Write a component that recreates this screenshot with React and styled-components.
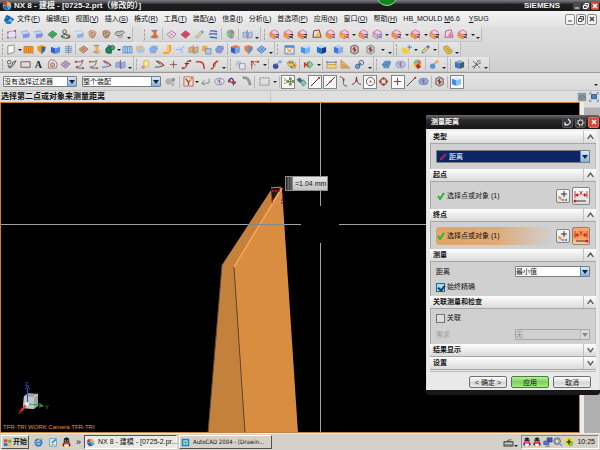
import React from 'react'
import styled, { createGlobalStyle, css } from 'styled-components'

const GlobalStyle = createGlobalStyle`
    * {
        box-sizing: border-box;
    }
    body {
        margin: 0;
        background: #000;
        color: #111;
        font: 7px/10px "Liberation Sans", "Noto Sans CJK SC", sans-serif;
    }
    button, select, input {
        font: inherit;
        color: inherit;
        margin: 0;
        padding: 0;
    }
    svg {
        flex-shrink: 0;
    }
`;

const Screen = styled.div`
    display: flex;
    flex-direction: column;
    min-height: 100vh;
`;

const TitleBar = styled.header`
    position: relative;
    display: flex;
    align-items: center;
    height: 11px;
    padding: 0 1px 0 2px;
    background: linear-gradient(#777a80, #4c4c50 3px, #202022 4px, #1a1a1b);
    color: #f2f2f2;
    overflow: hidden;

    h1 {
        flex: 1;
        margin: 0 0 0 2px;
        font-size: 8px;
        line-height: 11px;
        font-weight: 700;
        white-space: pre;
    }
    strong {
        margin-right: 12px;
        font-size: 8px;
    }
`;

const GreenBall = styled.span`
    position: absolute;
    left: 376px;
    top: -16px;
    width: 22px;
    height: 22px;
    border: 1px solid #b9c4b9;
    border-radius: 50%;
    background: #11861b;
`;

const WinButton = styled.button`
    display: flex;
    align-items: center;
    justify-content: center;
    width: 8px;
    height: 8px;
    margin-left: 1px;
    border: 0;
    border-radius: 1px;
    background: ${props => props.$bg || '#4b4b4e'};
    color: ${props => props.$ink || '#fff'};

    ${props => props.$framed && css`
        width: 10px;
        height: 11px;
        border: 1px solid #8c8c8c;
        border-radius: 2px;
    `}
`;

const MenuBar = styled.nav`
    display: flex;
    align-items: center;
    height: 16px;
    padding: 0 3px;
    background: linear-gradient(#f4f4f4, #e2e2e2);

    > svg {
        margin-right: 3px;
    }
`;

const MenuItem = styled.button`
    margin-right: ${props => props.$wide ? 9 : 6}px;
    border: 0;
    background: none;
    white-space: nowrap;
`;

const Spacer = styled.span`
    flex: 1;
`;

const ToolArea = styled.div`
    background: linear-gradient(#dedede, #cfcfcf);
    border-bottom: 1px solid #9a9a9a;
`;

const ToolRow = styled.div`
    display: flex;
    height: 15px;
`;

const ToolGroup = styled.div`
    display: flex;
    align-items: center;
    justify-content: space-between;
    width: ${props => props.$width}px;
    padding: 0 2px;
    margin-right: ${props => props.$after || 0}px;
    background: linear-gradient(#e6e6e6, #d6d6d6);
    border-right: 1px solid #bdbdbd;
    border-bottom: 1px solid #c6c6c6;
`;

const Grip = styled.span`
    width: 2px;
    height: 11px;
    border-left: 1px dashed #a8a8a8;
`;

const Rule = styled.span`
    width: 1px;
    height: 12px;
    background: #b9b9b9;
`;

const ToolButton = styled.button`
    display: flex;
    align-items: center;
    justify-content: center;
    width: ${props => props.$pressed ? 14 : 12}px;
    height: ${props => props.$pressed ? 14 : 12}px;
    border: ${props => props.$pressed ? '1px solid #858585' : '0'};
    background: ${props => props.$pressed ? '#fbfbfb' : 'none'};
`;

const More = styled.button`
    width: 3px;
    height: ${props => props.$low ? 9 : 3}px;
    border: 0;
    background: none;
    display: flex;
    align-items: flex-end;

    &::after {
        content: "";
        border: 2px solid transparent;
        border-top-color: #222;
        border-bottom: 0;
    }
`;

const FilterBar = styled.div`
    display: flex;
    align-items: center;
    height: 18px;
    padding: 0 3px;
    background: linear-gradient(#e4e4e4, #d8d8d8);
    border-bottom: 1px solid #c3c3c3;
`;

const FilterTools = styled.div`
    display: flex;
    align-items: center;
    justify-content: space-between;
    width: ${props => props.$width}px;
    margin-left: ${props => props.$before || 0}px;
`;

const Combo = styled.span`
    position: relative;
    display: block;
    width: ${props => props.$width ? props.$width + 'px' : '100%'};
    margin-right: ${props => props.$after || 0}px;

    select {
        display: block;
        appearance: none;
        width: 100%;
        height: ${props => props.$height || 11}px;
        padding: 0 10px 0 ${props => props.$indent || 0}px;
        border: 1px solid ${props => props.$off ? '#a5a5a5' : '#7d7d7d'};
        border-radius: 1px;
        background: ${props => props.$bg || '#fff'};
        color: ${props => props.$ink || '#111'};
        line-height: 9px;
        opacity: 1;
    }
`;

const ComboArrow = styled.span`
    position: absolute;
    right: 1px;
    top: 1px;
    bottom: 1px;
    display: flex;
    align-items: center;
    justify-content: center;
    width: 9px;
    background: ${props => props.$off ? '#d9d9d9' : 'linear-gradient(#d9ebfb, #7fb2e5)'};
    border-left: 1px solid ${props => props.$off ? '#bbb' : '#5e8cba'};
    pointer-events: none;

    &::after {
        content: "";
        border: 3px solid transparent;
        border-top: 4px solid ${props => props.$off ? '#8b8b8b' : '#10233c'};
        border-bottom: 0;
    }
`;

const ComboIcon = styled.span`
    position: absolute;
    left: 3px;
    top: 3px;
    display: flex;
    pointer-events: none;
`;

const StatusBar = styled.div`
    display: flex;
    align-items: center;
    justify-content: space-between;
    height: 11px;
    padding: 0 1px;
    background: #dedede;

    p {
        margin: 0;
        width: 270px;
        height: 11px;
        line-height: 11px;
        font-size: 8px;
        font-weight: 700;
        border-right: 1px solid #c4c4c4;
    }
    div {
        display: flex;
        gap: 2px;
    }
`;

const Workspace = styled.main`
    position: relative;
    display: flex;
    flex: 1;
`;

const Viewport = styled.section`
    position: relative;
    flex: 1;
    background: #000;
    border: 1px solid #c9803c;
    overflow: hidden;

    > svg {
        display: block;
    }
`;

const SideStrip = styled.aside`
    width: 20px;
    background: linear-gradient(#dcdcdc 5px, #b0b0b0 6px);
    border-left: 4px solid #ededed;
`;

const Measure = styled.output`
    position: absolute;
    left: 284px;
    top: 73px;
    width: 43px;
    height: 15px;
    padding-left: 9px;
    border: 1px solid #8e8e8e;
    background: linear-gradient(90deg, #222 1px, #777 2px, #333 4px, #888 5px, #333 6px, transparent 7px), linear-gradient(#e6e6e6, #c3c3c3);
    line-height: 13px;
    white-space: nowrap;
`;

const CameraLabel = styled.p`
    position: absolute;
    left: 2px;
    bottom: 0;
    margin: 0;
    color: #e2954a;
    font-size: 6px;
`;

const Dialog = styled.section`
    position: absolute;
    right: 0;
    top: 13px;
    width: 174px;
    border: 0 solid #181818;
    border-bottom-width: 5px;
    border-radius: 3px;
    background: #e9e9e9;
`;

const DialogTitle = styled.header`
    display: flex;
    align-items: center;
    height: 14px;
    padding: 0 1px 0 5px;
    border-radius: 3px 3px 0 0;
    background: linear-gradient(#6a6a6c, #2b2b2c 5px, #151515);
    color: #fff;

    h2 {
        flex: 1;
        margin: 0;
        font-size: 7px;
        font-weight: 700;
    }
    button {
        display: flex;
        align-items: center;
        justify-content: center;
        width: 11px;
        height: 11px;
        margin-left: 2px;
        border: 1px solid #555;
        border-radius: 2px;
        background: #39393b;
    }
    button:last-child {
        border-color: #d77866;
        background: #da4431;
    }
`;

const DialogBody = styled.div`
    padding: 2px 3px 0;
    border: solid #dedede;
    border-width: 0 1px 0 1px;
`;

const SectionHead = styled.button`
    display: flex;
    align-items: center;
    justify-content: space-between;
    width: 100%;
    height: 13px;
    padding-left: 3px;
    border: 0;
    border-bottom: 1px solid #a6a6a6;
    background: linear-gradient(#fdfdfd, #dadada);
    font-weight: 700;

    svg {
        width: 13px;
        height: 12px;
        border-left: 1px solid #c0c0c0;
    }
`;

const SectionBody = styled.div`
    display: flex;
    flex-direction: column;
    justify-content: ${props => props.$spread ? 'space-between' : 'center'};
    height: ${props => props.$height}px;
    padding: ${props => props.$spread ? '4px' : '0'} 5px;
    border-left: 1px solid #a6a6a6;
    border-right: 1px solid #c0c0c0;
    background: #d0d0d0;
`;

const PickRow = styled.div`
    display: flex;
    align-items: center;
    height: 18px;
    padding-left: 1px;
    border-radius: 3px;
    background: ${props => props.$active ? 'linear-gradient(90deg, #e0a467, #dfab78 40%, #d0d0d0 75%)' : 'none'};

    span {
        flex: 1;
        margin-left: 2px;
    }
`;

const PickButton = styled.button`
    display: flex;
    align-items: center;
    justify-content: center;
    width: ${props => props.$large ? 18 : 14}px;
    height: ${props => props.$large ? 18 : 14}px;
    margin-left: 2px;
    border: 1px solid #858585;
    border-radius: 2px;
    background: ${props => props.$hot ? 'linear-gradient(#f9a86b, #f4924c 50%, #ffd09a)' : 'linear-gradient(#fafafa, #dedede)'};
`;

const Field = styled.div`
    display: flex;
    align-items: center;
    justify-content: space-between;
    color: ${props => props.$off ? '#a0a0a0' : 'inherit'};
`;

const Check = styled.label`
    display: flex;
    align-items: center;
    gap: 2px;

    input {
        appearance: none;
        width: 9px;
        height: 9px;
        border: 1px solid #757575;
        background: #dedede;
    }
    input:checked {
        border-color: #29659c;
        background: #9bd9f5;
    }
    input:checked::after {
        content: "";
        display: block;
        width: 3px;
        height: 5px;
        margin-left: 2px;
        border: solid #123a78;
        border-width: 0 2px 2px 0;
        transform: rotate(40deg);
    }
`;

const DialogFooter = styled.footer`
    display: flex;
    justify-content: flex-end;
    gap: 4px;
    margin-top: 1px;
    padding: 4px 5px 2px;
    border-top: 1px solid #bcbcbc;
`;

const PushButton = styled.button`
    width: 38px;
    height: 12px;
    border: 1px solid ${props => props.$go ? '#438333' : '#707070'};
    border-radius: 2px;
    background: ${props => props.$go ? 'linear-gradient(#bdeca5, #7cce5c 50%, #a2ef7d)' : 'linear-gradient(#fff, #d6d6d6 60%, #ececec)'};
    line-height: 9px;
`;

const Taskbar = styled.footer`
    display: flex;
    align-items: center;
    height: 17px;
    padding: 0 1px;
    border-top: 1px solid #f2f0ec;
    background: #d5d1c9;
`;

const StartButton = styled.button`
    display: flex;
    align-items: center;
    gap: 1px;
    width: 28px;
    height: 14px;
    padding-left: 1px;
    border: 1px solid;
    border-color: #fff #55534f #55534f #fff;
    background: #d5d1c9;
    font-weight: 700;
    white-space: nowrap;
`;

const QuickLaunch = styled.div`
    display: flex;
    align-items: center;
    justify-content: space-between;
    width: 48px;
    margin: 0 3px 0 4px;
`;

const Launcher = styled.button`
    display: flex;
    border: 0;
    background: none;
    font-size: 9px;
`;

const TaskButton = styled.button`
    display: flex;
    align-items: center;
    gap: 3px;
    width: 93px;
    height: 14px;
    margin-right: 2px;
    padding: 0 1px;
    border: 1px solid;
    border-color: ${props => props.$open ? '#55534f #fff #fff #55534f' : '#fff #55534f #55534f #fff'};
    background: ${props => props.$open ? '#ebe9e5' : '#d5d1c9'};
    white-space: nowrap;
    font-family: ${props => props.$open ? '"Liberation Sans"' : '"DejaVu Sans Condensed"'}, "Noto Sans CJK SC", sans-serif;
    font-size: ${props => props.$open ? 7 : 6}px;
`;

const Tray = styled.div`
    display: flex;
    align-items: center;
    justify-content: space-between;
    width: 78px;
    height: 14px;
    margin-left: 4px;
    padding: 0 3px 0 0;
    border: 1px solid;
    border-color: #8b8882 #fff #fff #8b8882;

    time {
        margin-left: 3px;
    }
`;

const shapes = {
    sheet: (a, b) => <><path d="M2 3l8-1 1 7-9 1z" fill={a} stroke={b} /><path d="M1 3h2v1H1zM9 1h2v2H9zM1 9h2v1H1zM10 8h1v2h-1z" fill="#d43b3b" /></>,
    slab: (a, b) => <><path d="M1 3l7-1 2 3-7 1z" fill={a} stroke={b} strokeWidth=".6" /><path d="M3 6l8-1-1 4-7 1z" fill={b} /><path d="M1 3l2 3v4L1 6z" fill={a} /></>,
    diamond: (a, b) => <><path d="M6 2l5 3.500-5 4.500-5-4z" fill={a} stroke={b} strokeWidth=".8" /><path d="M3.500 4l5 4M8.500 4l-5 4" stroke={b} strokeWidth=".6" /></>,
    blobs: (a, b) => <><circle cx="5" cy="3" r="2" fill="none" stroke={a} /><path d="M1 8q3-3 6-2l4 1q-1 4-5 3z" fill="none" stroke={a} /><path d="M5 5l4 1-2 2zM2 8h3v2H2z" fill={b} /><path d="M8 8h3v2H8z" fill="#b53535" /></>,
    loops: (a, b) => <g fill="none"><path d="M1 5q2-3 5-2 4-2 5 1-2 3-5 3-4 1-5-2z" stroke={a} /><path d="M3 5l6-1M5 8l4-1v2l-3 1z" stroke={b} /></g>,
    sketch: (a) => <g fill="none" stroke={a} strokeWidth=".9"><circle cx="3.500" cy="3.500" r="2" /><path d="M2 7q3 4 6-4l3-1-3 5-4 3z" /></g>,
    mesh: (a, b) => <g fill="none"><path d="M2 3q4-3 8 1l-2 5q-3 2-5-1z" fill={a} fillOpacity=".4" stroke={a} /><path d="M2 6l7-3M4 9l6-4M4 2l3 8" stroke={b} strokeWidth=".8" /></g>,
    curve: (a, b) => <g fill="none"><path d="M2 3h5q3 0 1 3t-5 3M4 10h6" stroke={a} strokeWidth=".9" /><path d="M1 2h2v2H1zM8 1h2v2H8zM2 8h2v2H2zM9 9h2v2H9z" fill={b} /></g>,
    cube: (a, b, c) => <><path d="M1 3l5-2 5 2-5 2z" fill={a} /><path d="M1 3l5 2v6L1 9z" fill={b} /><path d="M6 5l5-2v6l-5 2z" fill={c} /></>,
    part: (a, b) => <><path d="M2 3l4-2 4 2v5H5z" fill="#f9c9e4" stroke="#c9519c" strokeWidth=".8" /><path d="M1 4l5 2v5L1 8z" fill={a} stroke="#c65d28" strokeWidth=".5" /><path d="M7 6h4M7 8l4 2M7 10l4-3" stroke={b} strokeWidth="1" /></>,
    tent: (a, b) => <><path d="M2 9l1-7 6-1 2 8z" fill="none" stroke={a} /><path d="M5 8l3-5 2 6z" fill={b} /></>,
    figure: (a, b) => <><path d="M2 1h7L8 4v2l3 3-5 1-5-1 4-3V4z" fill={a} /><path d="M3 1.500h6M3 9l5 1" stroke={b} /></>,
    book: (a, b) => <path d="M1 3q3-1 5 0 2-1 5 0v7q-3-1-5 0-2-1-5 0zM6 3v7M3.500 2.500v7M8.500 2.500v7" fill={a} stroke={b} strokeWidth=".6" />,
    shield: (a, b) => <><path d="M1 3l5-2 5 2-1 4-4 4-4-4z" fill={a} /><path d="M6 3v8l4-4V3z" fill={b} /></>,
    spring: (a, b) => <><path d="M3 2h6v8H3z" fill={a} /><path d="M2 3h8M2 5h8M2 7h8M2 9h8M6 1v10" stroke={b} strokeWidth=".8" /></>,
    page: (a, b) => <path d="M2 2l7-1v8l-7 2z" fill={a} stroke={b} strokeWidth=".8" />,
    elbow: (a, b) => <><path d="M6 1h4v6l-3 4H1l1-3h4z" fill={a} /><path d="M7 2v6H2" stroke={b} fill="none" /></>,
    ingot: (a, b) => <><path d="M1 6l3-4h6l1 3-3 5H3z" fill={a} /><path d="M1 6h6l3-4M7 6l1 4" fill="none" stroke={b} strokeWidth=".8" /></>,
    stack: (a, b) => <><path d="M1 2h6v6H1z" fill={a} /><path d="M5 5h6v6H5z" fill={b} stroke="#555" strokeWidth=".5" /></>,
    union: (a, b) => <><path d="M1 5l2-2h4v7H3L1 9z" fill={a} stroke="#173d31" strokeWidth=".7" /><circle cx="8" cy="4" r="2.500" fill={b} stroke="#173d31" strokeWidth=".7" /><path d="M3 1l4 2" stroke="#333" /></>,
    pen: (a, b) => <><path d="M2 10l1-3 5-5 2 2-5 5z" fill={a} stroke={b} strokeWidth=".7" /><circle cx="9" cy="3" r="1.500" fill={b} /></>,
    hand: (a, b) => <><path d="M4 2l4-1 3 4-3 4H4z" fill={a} stroke="#b9a35e" strokeWidth=".5" /><path d="M1 10l1-3 3 1v3z" fill={b} /><path d="M6 3v3M7 4v3" stroke="#fff" strokeWidth=".6" /></>,
    frame: (a) => <path d="M1 3h10v6H1z" fill="none" stroke={a} strokeWidth=".9" />,
    dashed: (a) => <path d="M1 2h10v8H1z" fill="none" stroke={a} strokeDasharray="2 1" />,
    letter: (a) => <text x="2" y="10" fill={a} fontFamily="Liberation Serif" fontWeight="700" fontSize="11">A</text>,
    spiral: (a, b) => <g fill="none" stroke={a} strokeWidth=".8"><path d="M2 10Q0 3 4 1q6-1 7 5 0 2-1 4z" /><path d="M4 8q-1-4 2-4 3 0 2 4z" fill={b} fillOpacity=".4" /></g>,
    mirror: (a, b) => <><path d="M1 4l4-1v6H1zM7 4l4-1v6l-4 1z" fill={b} stroke="#6688c4" strokeWidth=".7" /><path d="M6 1v10" stroke={a} /></>,
    lines: (a, b) => <g fill="none"><path d="M2 2h4l4 1M1 6q4-2 9 0M2 9h3l5 1" stroke={a} strokeWidth="1.500" /><path d="M2 3v2M9 7v2" stroke={b} /></g>,
    fork: (a, b) => <g fill="none"><path d="M1 9q5 0 10-2M7 6L2 2" stroke={a} /><path d="M3 2q4 1 8 5" stroke={b} strokeWidth="1.500" /></g>,
    plus: (a, b) => <><path d="M6 2v8M2 6h8" stroke={a} strokeWidth=".9" /><path d="M5 5h2v2H5z" fill={b} /></>,
    swing: (a, b) => <><path d="M1 10q5 1 5-4t5-4M4 5h5" fill="none" stroke={a} /><path d="M5 5h2v2H5zM9 1h2v2H9zM1 9h2v2H1z" fill={b} /></>,
    arc: (a, b) => <><path d="M1 3h4q5 0 5 8" fill="none" stroke={a} strokeWidth="1.500" /><path d="M1 2h3v1H1z" fill={b} /></>,
    step: (a, b) => <><path d="M2 11q4-1 3-5l4-4" fill="none" stroke={b} strokeWidth="1.500" /><path d="M4 10q4-2 3-5l4-3" fill="none" stroke={a} /></>,
    axes: (a, b) => <><path d="M3 11V3h7M3 3l4 4" fill="none" stroke={a} /><path d="M2 2h2v2H2zM9 2h2v2H9zM2 6h2v1H2z" fill={b} /></>,
    eye: (a, b) => <><circle cx="4" cy="8" r="2.500" fill={a} stroke={b} strokeWidth=".8" /><circle cx="8" cy="4" r="2.500" fill="none" stroke={b} /><path d="M5 7l3-3" stroke={b} /></>,
    globe: (a, b) => <><ellipse cx="6" cy="6" rx="5" ry="3.500" fill={a} stroke={b} strokeWidth=".7" /><path d="M3 4l6 4M3 7l5-3M6 3v6" stroke="#b14c69" strokeWidth=".7" /></>,
    ball: (a, b) => <><circle cx="6" cy="5" r="4.500" fill={a} /><path d="M6 5V1a4 4 0 0 1 4 4z" fill="#d85d9e" /><path d="M6 5H2a4 4 0 0 1 4-4z" fill="#54c5ae" /><path d="M4 7l3-2 3 4-4 2z" fill={b} /></>,
    palette: (a, b) => <><path d="M1 4q5-5 10 2l-1 4H7L6 8H3z" fill={a} stroke="#84722e" strokeWidth=".5" /><path d="M3 3h2v2H3zM8 6h2v2H8z" fill="#c64138" /><path d="M6 3h2v2H6zM5 8h2v2H5z" fill={b} /></>,
    play: (a, b) => <><path d="M1 3l4 3-4 4z" fill={a} /><path d="M7 2l4 4-4 4-2-4z" fill="#8ccf90" stroke={b} strokeWidth=".8" /><path d="M5 3v6" stroke="#c33" /></>,
    ruler: (a, b) => <><path d="M1 6h10v4H1z" fill={a} stroke={b} strokeWidth=".6" /><path d="M1 2v3M11 2v3M1 3.500h10" stroke="#434b88" strokeWidth=".8" /></>,
    triangle: (a, b) => <path d="M1 1v9h10zM3.500 6v2.500H7z" fill={a} fillRule="evenodd" stroke={b} strokeWidth=".6" />,
    dim: (a, b) => <><path d="M2 2l8 8M8 1L3 11M1 9l10-5" stroke={b} strokeWidth=".8" /><path d="M9 1v3M8 2h3" stroke={a} /></>,
    star: (a, b) => <><path d="M1 4h5v6H2zM5 6h4v4H5z" fill={a} /><path d="M9 1v5M7 3.500h5" stroke={b} /></>,
    link: (a, b) => <><path d="M2 3l4-1 5 5-1 3-4 1-4-5z" fill={a} stroke={b} strokeWidth=".7" /><path d="M4 5l4 4M5 4l4 4" stroke={b} strokeWidth=".7" /></>,
    pair: (a, b) => <><circle cx="4" cy="8" r="3" fill={a} /><circle cx="9" cy="3" r="2" fill={b} /><path d="M4 7l4-4" stroke="#6e85ab" /></>,
    window: (a, b) => <><path d="M1 2h10v9H1z" fill="#f7ead8" stroke={a} /><path d="M1 2h10v2H1z" fill={a} /><path d="M3 5l6 5M9 5l-6 5" stroke={b} /></>,
    section: (a, b) => <><path d="M2 3l4-2 4 2v6l-4 2-4-2z" fill="#c9c5c2" stroke={a} strokeWidth=".8" /><path d="M6 3v6M4 5l4 2" stroke={b} strokeWidth="1.500" /></>,
    line: (a, b) => <><path d="M1 11L11 1" stroke={a} />{b && <path d="M5 5h2v2H5z" fill={b} />}</>,
    ends: (a, b) => <><path d="M1 11L11 1" stroke={a} /><path d="M9 1h2v2H9z" fill={b} /></>,
    wave: (a, b) => <><path d="M2 1q5 0 4 5t4 5" fill="none" stroke={a} /><path d="M5 3h2v2H5z" fill={b} /></>,
    cross: (a, b) => <><path d="M1 9q5 0 5-8 0 8 5 8" fill="none" stroke={a} /><path d="M5 4h2v2H5z" fill={b} /></>,
    target: (a, b) => <><circle cx="6" cy="6" r="4.500" fill="none" stroke={a} strokeWidth=".9" /><path d="M5 5h2v2H5z" fill={b} /></>,
    ring: (a, b) => <><circle cx="6" cy="6" r="3.500" fill="none" stroke={a} /><path d="M5 1h2v3H5zM5 8h2v3H5zM1 5h3v2H1zM8 5h3v2H8z" fill={b} /></>,
    gears: (a, b) => <><circle cx="4" cy="6" r="3" fill={a} stroke={b} strokeDasharray="1 1" /><circle cx="9" cy="4" r="2" fill={b} /><path d="M7 7h3v4H7z" fill={a} /></>,
    pick: (a, b) => <><path d="M1 1h10v10H1z" fill="#f4dcdc" stroke={b} /><path d="M3 3l3 4 4-5M6 7v3" stroke={a} fill="none" strokeWidth="1.500" /><path d="M7 3h3v2H7z" fill="#edc747" /></>,
    back: (a) => <path d="M10 3v4q-3 2-7 1M5 5L2 8l3 2" fill="none" stroke={a} strokeWidth="1.500" />,
    bend: (a, b) => <><path d="M2 2q7-1 8 8" fill="none" stroke={a} strokeWidth="3" /><path d="M3 2q5 0 7 6" fill="none" stroke={b} strokeWidth=".7" /></>,
    snap: (a, b) => <><path d="M2 5q3-5 5 0v5M4 7h6" fill="none" stroke={a} strokeWidth="1.500" /><path d="M1 4h3v3H1zM6 6h3v3H6z" fill={b} /></>,
    nodes: (a, b) => <><path d="M1 2l2 2-2 2M1 8h2M5 6h6M8 3v6" stroke={a} fill="none" /><path d="M7 2h2v2H7zM4 5h2v2H4zM10 5h2v2h-2zM7 8h2v2H7z" fill={b} stroke="#222" strokeWidth=".6" /></>,
    leaves: (a, b) => <><path d="M1 4l3-2 3 3-3 2z" fill={a} stroke="#333" strokeWidth=".5" /><path d="M5 7l3-3 3 4-3 3z" fill={b} stroke="#346548" strokeWidth=".7" /></>,
    logo: () => <><circle cx="6" cy="6" r="5" fill="#e5ecef" /><path d="M1 5q1-4 5-4v5z" fill="#d7372f" /><path d="M6 1q5 0 5 5L6 6z" fill="#e8b443" /><path d="M1 6h5l3 4q-6 3-8-4z" fill="#2464bb" /><path d="M6 5l6 2-4 4z" fill="#3bb3d6" /></>,
    gearfile: () => <><path d="M3 2h4l5 4-4 5H4L1 7z" fill="#2c78cf" /><path d="M4 1l3 4 5 1M2 7l5-2 1 5" stroke="#123f79" fill="none" /><circle cx="8" cy="7" r="2" fill="#66b4ea" /></>,
    flag: () => <><path d="M1 2q3-1 5 0v4q-3-1-5 0z" fill="#e04830" /><path d="M7 2q2 1 4 0v4q-2 1-4 0z" fill="#62a83b" /><path d="M1 7q3-1 5 0v4q-3-1-5 0z" fill="#3972cc" /><path d="M7 7q2 1 4 0v4q-2 1-4 0z" fill="#efc038" /></>,
    ie: () => <><circle cx="6" cy="6" r="3.500" fill="none" stroke="#2c83d0" strokeWidth="2" /><path d="M3 6h7" stroke="#2c83d0" strokeWidth="1.500" /><path d="M1 10Q0 6 10 1l1 2" fill="none" stroke="#e8b641" /></>,
    penguin: (a, b) => <><ellipse cx="6" cy="4" rx="3" ry="3.500" fill="#181818" /><path d="M2 10q-1-3 2-4h4q3 1 2 4z" fill="#181818" /><ellipse cx="6" cy="9" rx="2.500" ry="2.500" fill="#fff" /><path d="M4 3h1v1H4zM7 3h1v1H7z" fill="#fff" /><path d="M4 5h4v1H4z" fill="#f4ad2c" /><path d="M2 6h8v2H2z" fill={a} /><path d="M2 10h3v1H2zM7 10h3v1H7z" fill={b} /></>,
    desk: () => <><path d="M2 2h8v9H2z" fill="#e7f4fb" stroke="#4f91bc" /><path d="M4 6l5-4 1 2-5 4z" fill="#4194c9" /><path d="M4 9h4" stroke="#d7783e" /></>,
    acad: () => <><path d="M1 1h10v10H1z" fill="#2386ac" /><path d="M3 3h6v6H3z" fill="#9ddbeb" /><path d="M5 5h2v2H5z" fill="#16637f" /></>,
    keyboard: () => <><path d="M1 5h10v5H1z" fill="#8c8a86" stroke="#4f4d4a" /><path d="M2 7h8" stroke="#f2f2f2" fill="none" strokeWidth=".8" /><path d="M4 5q0-2 5-2" stroke="#4f4d4a" fill="none" /></>,
    monitors: () => <><path d="M5 1h6v5H5z" fill="#3f5cb5" stroke="#26356b" strokeWidth=".7" /><path d="M1 5h6v4H1z" fill="#5d7ad0" stroke="#26356b" strokeWidth=".7" /><path d="M3 11h5" stroke="#555" /></>,
    speaker: () => <><circle cx="5" cy="5" r="4" fill="#a2a4ab" stroke="#666870" /><circle cx="5" cy="5" r="1.500" fill="#e5e5ea" /><path d="M8 8l3 3" stroke="#8ea0d0" strokeWidth="2" /></>,
    shield360: () => <><circle cx="6" cy="6" r="5" fill="#f1d91f" /><path d="M6 1a5 5 0 0 1 5 5L6 11a5 5 0 0 0 0-10z" fill="#4aa82b" /><path d="M6 3v6M3 6h6" stroke="#175e19" strokeWidth="2" /></>,
    fit: () => <><path d="M3 3h6v5H3z" fill="#4885cd" stroke="#234f85" /><path d="M1 3V1h2M9 1h2v2M11 9v2H9M3 11H1V9" fill="none" stroke="#33679d" /></>,
    grayed: () => <><path d="M1 1h10v10H1z" fill="#8c9a9c" /><path d="M2 8l3-4v5M6 4l4 2-3 3" stroke="#657376" fill="none" /></>,
};

const Icon = ({ name, colors = [], size = 11 }) => (
    <svg width={size} height={size} viewBox="0 0 12 12" aria-hidden="true">{shapes[name](...colors)}</svg>
)

// "v" is a drop-down arrow, "V" the overflow arrow, "|" a divider
const t = (name, ...colors) => ({ name, colors })
const on = (name, ...colors) => ({ name, colors, pressed: true })

const blue = ['#c9def5', '#2e63c9', '#4d8ae5']
const part = (ink = '#333', face = '#f79a35') => t('part', face, ink)

const rows = [
    [
        { width: 133, after: 9, tools: [t('sheet', '#e6e3f6', '#a79fd6'), t('slab', '#c5d6f5', '#7e95e6'), t('slab', '#c5d6f5', '#7f8ee2'), t('diamond', '#4fa866', '#32894a'), t('blobs', '#42423c', '#3f9150'), t('slab', '#dce8f8', '#93aee0'), t('mesh', '#e2834e', '#85817d'), t('mesh', '#d44c43', '#479a50'), t('loops', '#555', '#999'), 'V'] },
        { width: 119, after: 1, tools: [t('figure', '#dd6f3d', '#6d7fc0'), '|', t('diamond', '#f3e2ea', '#9a5d8e'), t('diamond', '#e94343', '#8058a9'), t('pen', '#ecd26a', '#72a4d8'), t('lines', '#3868c9', '#9bb4dc'), '|', t('ball', '#a3c756', '#8199c7'), '|', t('mirror', '#c0873c', '#a9c9f4'), 'V'] },
        { width: 220, tools: [part('#5b4860'), part('#222'), part('#333', '#fc8b35'), t('tent', '#8c2c25', '#f1b92d'), part('#7d5b61'), part('#b73e4d', '#f6b02c'), 'v', part('#4b5575'), part('#4c77cb', '#b7b6ee'), 'v', part('#713d76'), 'v', part('#a13333'), 'v', part('#333', '#f5a93f'), t('tent', '#c44f9f', '#e57d88'), part('#3c3438'), 'v', 'V'] },
    ],
    [
        { width: 275, tools: [t('page', '#f4f9f2', '#6d7c6f'), 'v', t('book', '#f79e2c', '#c05a13'), t('shield', '#f09a26', '#3663b2'), t('cube', ...blue), t('spring', '#c6d6e6', '#6487ad'), '|', t('diamond', '#f1962d', '#5f7fb9'), t('figure', '#eab05a', '#5b94d7'), t('union', '#21865d', '#3cae86'), 'v', t('book', '#b4d1f1', '#2e66bb'), t('slab', '#f1b967', '#a2c4e8'), t('ingot', '#7eaaf0', '#e9a650'), t('elbow', '#f4a52f', '#ffd386'), t('ingot', '#cddcf7', '#7f9ddd'), t('mirror', '#e18936', '#f0ae5f'), t('stack', '#f2aa48', '#a8caee'), t('ingot', '#7298e8', '#e78c9a'), '|', t('cube', '#e9783f', '#3162c0', '#7da4e4'), t('shield', '#e3824d', '#5c8dd8'), t('diamond', '#8ab8eb', '#3e65ae'), 'V'] },
        { width: 119, tools: [t('window', '#4588cd', '#dd872c'), t('cube', '#bde1fb', '#3d94ea', '#74b8f2'), t('cube', '#aed7f8', '#1b75d8', '#163c80'), t('cube', '#a9c9f6', '#4272d6', '#86aef0'), t('section', '#3b3b3b', '#a83030'), t('section', '#777', '#813c3c'), 'v', 'V'] },
        { width: 67, tools: [t('star', '#f7cb35', '#3a7fd4'), 'v', t('pen', '#f2cf54', '#3f77c7'), 'v', '|', t('link', '#e0c354', '#8f7a2b'), 'V'] },
    ],
    [
        { width: 134, tools: [t('sketch', '#44443c'), t('frame', '#6d4440'), t('letter', '#22252b'), t('spiral', '#9b4f52', '#d3888a'), t('diamond', '#9cb7eb', '#bd4848'), t('curve', '#555', '#cc3636'), t('curve', '#555', '#b96a4a'), t('fork', '#3665c0', '#c83c34'), t('mirror', '#c34d5f', '#92b5ef'), 'V'] },
        { width: 94, tools: [t('hand', '#f0d978', '#d08fa8'), t('fork', '#444', '#b5403a'), t('plus', '#7d605c', '#ce3e33'), t('swing', '#4b201f', '#c52622'), t('arc', '#c93a30', '#777'), t('step', '#e37326', '#a02e24'), 'V'] },
        { width: 146, tools: [t('stack', '#b8c9dd', '#e3e7eb'), t('axes', '#8f5b43', '#c4362a'), 'v', '|', t('pair', '#33549e', '#8db0e6'), t('palette', '#e8ce4d', '#4570b7'), '|', t('play', '#c63d3a', '#2f9146'), 'v', '|', t('ruler', '#f0d76a', '#ac7a3a'), t('triangle', '#e7b66d', '#af722d'), t('eye', '#7298df', '#425a84'), 'V'] },
        { width: 74, tools: [t('ingot', '#5f93d6', '#3c8e8b'), t('globe', '#b9d0f3', '#507fcb'), '|', t('ball', '#e9bd21', '#b92d2c'), '|', t('pair', '#5c94e0', '#f2b25b'), 'V'] },
        { width: 42, tools: [t('cube', '#93a9c0', '#3478d0', '#425a76'), '|', t('dim', '#999', '#504f4e'), 'V'] },
    ],
]

const filterTools = [
    { width: 30, before: 3, tools: [t('gears', '#b3b3b0', '#92928f'), '|', t('pick', '#8a5a30', '#d35b5b')] },
    { width: 57, before: 1, tools: ['v', t('back', '#9aa49d'), t('globe', '#dee9f4', '#4d6b97'), t('snap', '#274b9e', '#c3332f'), t('bend', '#8b8b88', '#bcbcb8')] },
    { width: 26, before: 2, tools: ['|', t('dashed', '#777'), 'v', '|'] },
    { width: 149, before: 1, tools: [on('nodes', '#37a143', '#eed84b'), t('leaves', '#4169a5', '#87c99c'), on('ends', '#222', '#d32a20'), on('line', '#222', '#d32a20'), t('wave', '#555', '#d32a20'), t('cross', '#444', '#d32a20'), on('target', '#444', '#d32a20'), t('ring', '#333', '#dc382d'), on('plus', '#333', '#dc382d'), t('ends', '#703532', '#b4322b'), t('globe', '#8ab8ed', '#3a6daf')] },
    { width: 33, before: 1, tools: ['|', t('section', '#333', '#8f2e2c'), '|', on('cube', '#d6edfd', '#3d8ce1', '#89c1f0')] },
]

const renderTools = tools => tools.map((tool, i) => {
    if (tool === '|') return <Rule key={i} />
    if (tool === 'v' || tool === 'V') return <More key={i} $low={tool === 'V'} aria-label="More tools" />
    return (
        <ToolButton key={i} $pressed={tool.pressed} aria-label={tool.name}>
            <Icon name={tool.name} colors={tool.colors} />
        </ToolButton>
    )
})

const menus = [['文件', 'F'], ['编辑', 'E'], ['视图', 'V'], ['插入', 'S'], ['格式', 'R'], ['工具', 'T'], ['装配', 'A'], ['信息', 'I'], ['分析', 'L'], ['首选项', 'P'], ['应用', 'N'], ['窗口', 'O'], ['帮助', 'H']]

const Mark = ({ kind }) => (
    <svg width="6" height="6" viewBox="0 0 6 6" fill="none" stroke="currentColor" aria-hidden="true">
        {kind === 'min' && <path d="M1 5h4" />}
        {kind === 'max' && <path d="M2 2V.5h3.500V4H4M.5 2.500H4V5.500H.5z" />}
        {kind === 'close' && <path d="M1 1l4 4M5 1L1 5" strokeWidth="1.500" />}
    </svg>
)

const Model = () => (
    <svg width="598" height="329" viewBox="1 103 598 329" aria-hidden="true">
        <path d="M208 433L222 265 271 190 283 188 234 267 245 433z" fill="#c4813c" />
        <path d="M234 267L282 189 298 433H245z" fill="#d88d40" />
        <path d="M222 265L208 433M234 267l11 166" stroke="#5e4b38" fill="none" />
        <path d="M234 267l48-79" stroke="#ffa64f" strokeWidth="1.500" />
        <path d="M271 189h9l-8 13z" fill="#201919" />
        <path d="M271 188l10-1M272 203h7l3-9" stroke="#bf9b83" fill="none" />
        <path d="M272 191h9M272 199v4M282 199v5" stroke="#d01820" strokeWidth="1.500" strokeDasharray="2 1" />
        <path d="M0 224.500h301M339 224.500h90M320.500 103v103M320.500 243v190" stroke="#9da3a8" />
        <path d="M247 224.500h37" stroke="#788b91" />
        <path d="M24 396l4-3 10 1v12l-4 3-11-1z" fill="#9fa2a5" />
        <path d="M24 396l10 1v12l-11-1z" fill="#c3c4c7" />
        <path d="M34 397l4-3" stroke="#e1e1e1" />
        <path d="M27.500 403v-15M25.500 389l2-4 2 4" stroke="#244de0" fill="none" />
        <path d="M28 404l14 1.500M39 403l4 3-4 1" stroke="#31a344" fill="none" />
        <path d="M26 405l-5 6" stroke="#e53935" strokeWidth="2" />
        <circle cx="27" cy="404" r="2" fill="#eee" />
        <g fontFamily="Liberation Sans" fontSize="6">
            <text x="25" y="386" fill="#244de0">Z</text>
            <text x="45" y="409" fill="#31a344">Y</text>
            <text x="18" y="414" fill="#e53935">X</text>
        </g>
    </svg>
)

const Section = ({ title, closed, height, spread, children }) => (
    <>
        <SectionHead aria-expanded={!closed}>
            {title}
            <svg viewBox="0 0 13 12" fill="none" stroke="#555" strokeWidth="1.500" aria-hidden="true">
                <path d={closed ? 'M4 4l3 4 3-4' : 'M4 8l3-4 3 4'} />
            </svg>
        </SectionHead>
        {!closed && <SectionBody $height={height} $spread={spread}>{children}</SectionBody>}
    </>
)

const Picker = ({ active }) => (
    <PickRow $active={active}>
        <svg width="8" height="8" viewBox="0 0 8 8" aria-hidden="true">
            <path d="M1 4l2 3 4-6" fill="none" stroke="#27b833" strokeWidth="2" />
        </svg>
        <span>选择点或对象 (1)</span>
        <PickButton aria-label="点构造器">
            <svg width="12" height="12" viewBox="0 0 12 12" aria-hidden="true">
                <path d="M7 1v6M4 4h6" stroke="#333" />
                <path d="M1 6l3 1 1 3-3-1z" fill="#ec8734" />
                <path d="M5 10h6" stroke="#333" strokeDasharray="2 1" />
            </svg>
        </PickButton>
        <PickButton $large $hot={active} aria-label="点">
            <svg width="16" height="16" viewBox="0 0 16 16" fill="none" aria-hidden="true">
                <path d="M2 3v7M14 3v7M2 7h4M10 7h4M6.500 3l3 4M9.500 3l-3 4" stroke="#d33a35" />
                <path d="M2 7l3-2v4zM14 7l-3-2v4z" fill="#c62c2b" />
                <path d="M3 13h10" stroke="#4b3533" />
                <circle cx={active ? 14 : 2} cy="13" r="1.500" fill="#d3211f" />
            </svg>
        </PickButton>
    </PickRow>
)

const MeasureDialog = () => (
    <Dialog role="dialog" aria-label="测量距离">
        <DialogTitle>
            <h2>测量距离</h2>
            <button aria-label="重置">
                <svg width="9" height="9" viewBox="0 0 9 9" fill="none" stroke="#eee"><path d="M5 1q3 2 2 4-2 3-5 1M2 4v3h3" strokeWidth="1.200" /></svg>
            </button>
            <button aria-label="选项">
                <svg width="9" height="9" viewBox="0 0 9 9" fill="none" stroke="#eee"><circle cx="4.500" cy="4.500" r="2.500" /><circle cx="4.500" cy="4.500" r="3.500" strokeDasharray="1 2" /></svg>
            </button>
            <button aria-label="关闭"><Mark kind="close" /></button>
        </DialogTitle>
        <DialogBody>
            <Section title="类型" height={25}>
                <Combo $height={13} $indent={12} $bg="#0b246a" $ink="#fff">
                    <select aria-label="类型"><option>距离</option></select>
                    <ComboIcon>
                        <svg width="8" height="8" viewBox="0 0 8 8" aria-hidden="true"><path d="M1 7l6-6" stroke="#a9233b" strokeWidth="2" /><path d="M1 4l3 3M4 1l3 3" stroke="#4d3e71" /></svg>
                    </ComboIcon>
                    <ComboArrow />
                </Combo>
            </Section>
            <Section title="起点" height={27}><Picker /></Section>
            <Section title="终点" height={27}><Picker active /></Section>
            <Section title="测量" height={34} spread>
                <Field>
                    <label htmlFor="measure">距离</label>
                    <Combo $width={75}>
                        <select id="measure"><option>最小值</option></select>
                        <ComboArrow />
                    </Combo>
                </Field>
                <Check><input type="checkbox" defaultChecked />始终精确</Check>
            </Section>
            <Section title="关联测量和检查" height={35} spread>
                <Check><input type="checkbox" />关联</Check>
                <Field $off>
                    <label htmlFor="need">需求</label>
                    <Combo $width={75} $off $bg="#d0d0d0" $ink="#888">
                        <select id="need" disabled><option>无</option></select>
                        <ComboArrow $off />
                    </Combo>
                </Field>
            </Section>
            <Section title="结果显示" closed />
            <Section title="设置" closed />
            <DialogFooter>
                <PushButton>&lt; 确定 &gt;</PushButton>
                <PushButton $go>应用</PushButton>
                <PushButton>取消</PushButton>
            </DialogFooter>
        </DialogBody>
    </Dialog>
)

export default function App() {
    return (
        <Screen>
            <GlobalStyle />
            <TitleBar>
                <Icon name="logo" size={10} />
                <h1>NX 8 - 建模 - [0725-2.prt（修改的）]</h1>
                <GreenBall />
                <strong>SIEMENS</strong>
                <WinButton aria-label="最小化"><Mark kind="min" /></WinButton>
                <WinButton aria-label="还原"><Mark kind="max" /></WinButton>
                <WinButton aria-label="关闭" $bg="#d94b36"><Mark kind="close" /></WinButton>
            </TitleBar>
            <MenuBar>
                <Icon name="gearfile" size={11} />
                {menus.map(([label, key]) => (
                    <MenuItem key={key}>{label}(<u>{key}</u>)</MenuItem>
                ))}
                <MenuItem $wide>HB_MOULD <u>M</u>6.6</MenuItem>
                <MenuItem><u>Y</u>SUG</MenuItem>
                <Spacer />
                <WinButton $framed $bg="#f3f3f3" $ink="#444" aria-label="最小化窗口"><Mark kind="min" /></WinButton>
                <WinButton $framed $bg="#f3f3f3" $ink="#444" aria-label="还原窗口"><Mark kind="max" /></WinButton>
                <WinButton $framed $bg="#f3f3f3" $ink="#444" aria-label="关闭窗口"><Mark kind="close" /></WinButton>
            </MenuBar>
            <ToolArea>
                {rows.map((groups, r) => (
                    <ToolRow key={r}>
                        {groups.map((group, g) => (
                            <ToolGroup key={g} $width={group.width} $after={group.after}>
                                <Grip />
                                {renderTools(group.tools)}
                            </ToolGroup>
                        ))}
                    </ToolRow>
                ))}
            </ToolArea>
            <FilterBar>
                <Combo $width={74} $after={5}>
                    <select aria-label="类型过滤器"><option>没有选择过滤器</option></select>
                    <ComboArrow />
                </Combo>
                <Combo $width={79}>
                    <select aria-label="选择范围"><option>整个装配</option></select>
                    <ComboArrow />
                </Combo>
                {filterTools.map((group, i) => (
                    <FilterTools key={i} $width={group.width} $before={group.before}>{renderTools(group.tools)}</FilterTools>
                ))}
                <Spacer />
                <More $low aria-label="更多" />
            </FilterBar>
            <StatusBar>
                <p>选择第二点或对象来测量距离</p>
                <div>
                    <Icon name="grayed" size={10} />
                    <Icon name="fit" size={10} />
                </div>
            </StatusBar>
            <Workspace>
                <Viewport>
                    <Model />
                    <Measure>=1.04 mm</Measure>
                    <CameraLabel>TFR-TRI WORK Camera TFR-TRI</CameraLabel>
                </Viewport>
                <SideStrip />
                <MeasureDialog />
            </Workspace>
            <Taskbar>
                <StartButton><Icon name="flag" size={9} />开始</StartButton>
                <QuickLaunch>
                    <Launcher aria-label="Internet Explorer"><Icon name="ie" size={11} /></Launcher>
                    <Launcher aria-label="桌面"><Icon name="desk" size={10} /></Launcher>
                    <Launcher aria-label="QQ"><Icon name="penguin" size={11} colors={['#d8342b', '#f1a22f']} /></Launcher>
                    <Launcher aria-label="更多">»</Launcher>
                </QuickLaunch>
                <TaskButton $open><Icon name="logo" size={9} />NX 8 - 建模 - [0725-2.pr...</TaskButton>
                <TaskButton><Icon name="acad" size={9} />AutoCAD 2004 - [Drawin...</TaskButton>
                <Spacer />
                <Icon name="keyboard" size={11} />
                <More $low aria-label="语言栏" />
                <Tray>
                    <Icon name="penguin" size={10} colors={['#e03c9f', '#f1a22f']} />
                    <Icon name="penguin" size={10} colors={['#d8342b', '#f1a22f']} />
                    <Icon name="monitors" size={10} />
                    <Icon name="speaker" size={10} />
                    <Icon name="shield360" size={10} />
                    <time>10:25</time>
                </Tray>
            </Taskbar>
        </Screen>
    )
}
